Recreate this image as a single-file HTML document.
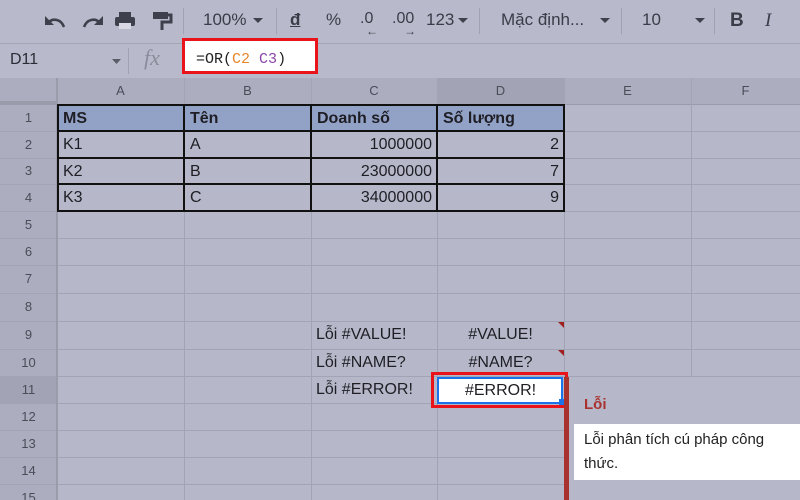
<!DOCTYPE html>
<html><head><meta charset="utf-8"><style>
*{margin:0;padding:0;box-sizing:border-box}
body{width:800px;height:500px;overflow:hidden;background:#b6b8ca;font-family:"Liberation Sans",Arial,sans-serif;position:relative;color:#1e1e24}
.a{position:absolute}
.hl{position:absolute;left:0;width:800px;height:1px;background:#a2a4b6}
.vl{position:absolute;top:78px;height:422px;width:1px;background:#a2a4b6}
.rh{position:absolute;left:0;width:57px;text-align:center;font-size:13px;color:#4a4c58;background:#acaec0}
.ch{position:absolute;top:78px;height:26px;line-height:26px;text-align:center;font-size:13px;color:#4a4c58;background:#acaec0}
.c{position:absolute;font-size:16px;height:27px;line-height:27px;padding:0 5px;white-space:nowrap}
.r{text-align:right}
.tb{position:absolute;top:10px;font-size:17px;color:#3a3c48}
</style></head><body>
<!-- toolbar -->
<div class="a" style="left:0;top:0;width:800px;height:44px;background:#b8bacb;border-bottom:1px solid #a4a6b6"></div>
<svg class="a" style="left:40px;top:8px" width="150" height="26" viewBox="0 0 150 26" fill="none" stroke="#3e404c" stroke-width="2.6">
<path d="M24 19 C21 11 13 10 9 14"/><path d="M5 8 L5 17 L14 17Z" fill="#3e404c" stroke="none"/>
<path d="M44 19 C47 11 55 10 59 14"/><path d="M63 8 L63 17 L54 17Z" fill="#3e404c" stroke="none"/>
<rect x="75" y="9" width="20" height="9" rx="2" fill="#3e404c" stroke="none"/><rect x="79" y="4" width="12" height="5" fill="#3e404c" stroke="none"/><rect x="79" y="15" width="12" height="6" fill="#d8d9e4" stroke="none"/>
<rect x="113" y="4" width="15" height="7" fill="#3e404c" stroke="none"/><path d="M128 7 h3 v7 h-9 v8" stroke-width="3"/>
</svg>
<div class="a" style="left:183px;top:8px;width:1px;height:26px;background:#a0a2b2"></div>
<div class="tb" style="left:203px">100%</div>
<svg class="a" style="left:253px;top:18px" width="10" height="6"><path d="M0 0h10L5 5z" fill="#3e404c"/></svg>
<div class="a" style="left:276px;top:8px;width:1px;height:26px;background:#a0a2b2"></div>
<div class="tb" style="left:290px;text-decoration:underline;font-weight:bold">đ</div>
<div class="tb" style="left:326px">%</div>
<div class="tb" style="left:360px;font-size:16px">.0<span style="position:absolute;left:6px;top:14px;font-size:12px">←</span></div>
<div class="tb" style="left:392px;font-size:16px">.00<span style="position:absolute;left:12px;top:14px;font-size:12px">→</span></div>
<div class="tb" style="left:426px">123</div>
<svg class="a" style="left:458px;top:18px" width="10" height="6"><path d="M0 0h10L5 5z" fill="#3e404c"/></svg>
<div class="a" style="left:479px;top:8px;width:1px;height:26px;background:#a0a2b2"></div>
<div class="tb" style="left:501px">Mặc định...</div>
<svg class="a" style="left:600px;top:18px" width="10" height="6"><path d="M0 0h10L5 5z" fill="#3e404c"/></svg>
<div class="a" style="left:621px;top:8px;width:1px;height:26px;background:#a0a2b2"></div>
<div class="tb" style="left:642px">10</div>
<svg class="a" style="left:695px;top:18px" width="10" height="6"><path d="M0 0h10L5 5z" fill="#3e404c"/></svg>
<div class="a" style="left:714px;top:8px;width:1px;height:26px;background:#a0a2b2"></div>
<div class="tb" style="left:730px;font-weight:bold;font-size:19px">B</div>
<div class="tb" style="left:765px;font-style:italic;font-size:19px;font-family:'Liberation Serif',serif">I</div>
<!-- formula bar -->
<div class="a" style="left:0;top:44px;width:800px;height:34px;background:#b8bacb"></div>
<div class="a" style="left:10px;top:51px;font-size:16px;color:#2a2c36">D11</div>
<svg class="a" style="left:112px;top:59px" width="9" height="5"><path d="M0 0h9L4.5 5z" fill="#5a5c68"/></svg>
<div class="a" style="left:128px;top:48px;width:1px;height:26px;background:#a0a2b2"></div>
<div class="a" style="left:144px;top:45px;font-size:22px;font-style:italic;color:#8a8c9a;font-family:'Liberation Serif',serif">fx</div>
<div class="a" style="left:182px;top:38px;width:136px;height:36px;background:#fff;border:3px solid #e8141a"></div>
<div class="a" style="left:196px;top:51px;font-size:15px;font-family:'Liberation Mono','DejaVu Sans Mono',monospace;color:#222">=OR(<span style="color:#e8862a">C2</span> <span style="color:#8a47a8">C3</span>)</div>
<!-- headers -->
<div class="ch" style="left:0;width:57px;border-bottom:3px solid #9a9cac"></div>
<div class="ch" style="left:57px;width:127px">A</div>
<div class="ch" style="left:184px;width:127px">B</div>
<div class="ch" style="left:311px;width:126px">C</div>
<div class="ch" style="left:437px;width:127px;background:#a2a4b6">D</div>
<div class="ch" style="left:564px;width:127px">E</div>
<div class="ch" style="left:691px;width:109px">F</div>
<div class="rh" style="top:105px;height:26px;line-height:26px">1</div>
<div class="rh" style="top:131px;height:27px;line-height:27px">2</div>
<div class="rh" style="top:158px;height:26px;line-height:26px">3</div>
<div class="rh" style="top:184px;height:27px;line-height:27px">4</div>
<div class="rh" style="top:211px;height:27px;line-height:27px">5</div>
<div class="rh" style="top:238px;height:27px;line-height:27px">6</div>
<div class="rh" style="top:265px;height:28px;line-height:28px">7</div>
<div class="rh" style="top:293px;height:28px;line-height:28px">8</div>
<div class="rh" style="top:321px;height:28px;line-height:28px">9</div>
<div class="rh" style="top:349px;height:27px;line-height:27px">10</div>
<div class="rh" style="top:376px;height:27px;line-height:27px;background:#a2a4b6">11</div>
<div class="rh" style="top:403px;height:27px;line-height:27px">12</div>
<div class="rh" style="top:430px;height:27px;line-height:27px">13</div>
<div class="rh" style="top:457px;height:27px;line-height:27px">14</div>
<div class="rh" style="top:484px;height:16px;line-height:27px;overflow:hidden">15</div>
<!-- grid lines -->
<div class="hl" style="top:104px;background:#9a9cac"></div>
<div class="hl" style="top:131px"></div><div class="hl" style="top:158px"></div><div class="hl" style="top:184px"></div>
<div class="hl" style="top:211px"></div><div class="hl" style="top:238px"></div><div class="hl" style="top:265px"></div>
<div class="hl" style="top:293px"></div><div class="hl" style="top:321px"></div><div class="hl" style="top:349px"></div>
<div class="hl" style="top:376px"></div><div class="hl" style="top:403px"></div><div class="hl" style="top:430px"></div>
<div class="hl" style="top:457px"></div><div class="hl" style="top:484px"></div>
<div class="vl" style="left:56px;width:2px;background:#9a9cac"></div>
<div class="vl" style="left:184px"></div><div class="vl" style="left:311px"></div><div class="vl" style="left:437px"></div>
<div class="vl" style="left:564px"></div><div class="vl" style="left:691px"></div>
<!-- table -->
<div class="a" style="left:57px;top:105px;width:508px;height:26px;background:#92a2c6"></div>
<div class="a" style="left:57px;top:104px;width:508px;height:108px;border:2px solid #111"></div>
<div class="a" style="left:57px;top:130px;width:508px;height:2px;background:#111"></div>
<div class="a" style="left:57px;top:157px;width:508px;height:2px;background:#111"></div>
<div class="a" style="left:57px;top:183px;width:508px;height:2px;background:#111"></div>
<div class="a" style="left:183px;top:104px;width:2px;height:108px;background:#111"></div>
<div class="a" style="left:310px;top:104px;width:2px;height:108px;background:#111"></div>
<div class="a" style="left:436px;top:104px;width:2px;height:108px;background:#111"></div>
<div class="c" style="left:58px;top:105px;font-weight:bold">MS</div>
<div class="c" style="left:185px;top:105px;font-weight:bold">Tên</div>
<div class="c" style="left:312px;top:105px;font-weight:bold">Doanh số</div>
<div class="c" style="left:438px;top:105px;font-weight:bold">Số lượng</div>
<div class="c" style="left:58px;top:131px">K1</div><div class="c" style="left:185px;top:131px">A</div>
<div class="c r" style="left:311px;width:126px;top:131px">1000000</div><div class="c r" style="left:437px;width:127px;top:131px">2</div>
<div class="c" style="left:58px;top:158px">K2</div><div class="c" style="left:185px;top:158px">B</div>
<div class="c r" style="left:311px;width:126px;top:158px">23000000</div><div class="c r" style="left:437px;width:127px;top:158px">7</div>
<div class="c" style="left:58px;top:184px">K3</div><div class="c" style="left:185px;top:184px">C</div>
<div class="c r" style="left:311px;width:126px;top:184px">34000000</div><div class="c r" style="left:437px;width:127px;top:184px">9</div>
<!-- errors -->
<div class="c" style="left:311px;top:321px">Lỗi #VALUE!</div>
<div class="c" style="left:437px;width:127px;top:321px;text-align:center">#VALUE!</div>
<div class="a" style="left:558px;top:322px;width:0;height:0;border-left:6px solid transparent;border-top:6px solid #a02020"></div>
<div class="c" style="left:311px;top:349px">Lỗi #NAME?</div>
<div class="c" style="left:437px;width:127px;top:349px;text-align:center">#NAME?</div>
<div class="a" style="left:558px;top:350px;width:0;height:0;border-left:6px solid transparent;border-top:6px solid #a02020"></div>
<div class="c" style="left:311px;top:376px">Lỗi #ERROR!</div>
<div class="a" style="left:431px;top:372px;width:137px;height:36px;border:3px solid #e8141a"></div>
<div class="a" style="left:437px;top:377px;width:126px;height:27px;background:#fff;border:2px solid #1a73e8"></div>
<div class="c" style="left:437px;width:127px;top:377px;text-align:center">#ERROR!</div>
<div class="a" style="left:559px;top:399px;width:6px;height:6px;background:#1a73e8"></div>
<!-- tooltip -->
<div class="a" style="left:564px;top:377px;width:236px;height:123px;background:#b6b8ca"></div>
<div class="a" style="left:564px;top:377px;width:5px;height:123px;background:#a8322e"></div>
<div class="a" style="left:584px;top:396px;font-size:15px;font-weight:bold;color:#a8322e">Lỗi</div>
<div class="a" style="left:574px;top:424px;width:226px;height:56px;background:#fff"></div>
<div class="a" style="left:584px;top:428px;font-size:15px;line-height:24px;color:#222;width:216px">Lỗi phân tích cú pháp công thức.</div>
</body></html>
